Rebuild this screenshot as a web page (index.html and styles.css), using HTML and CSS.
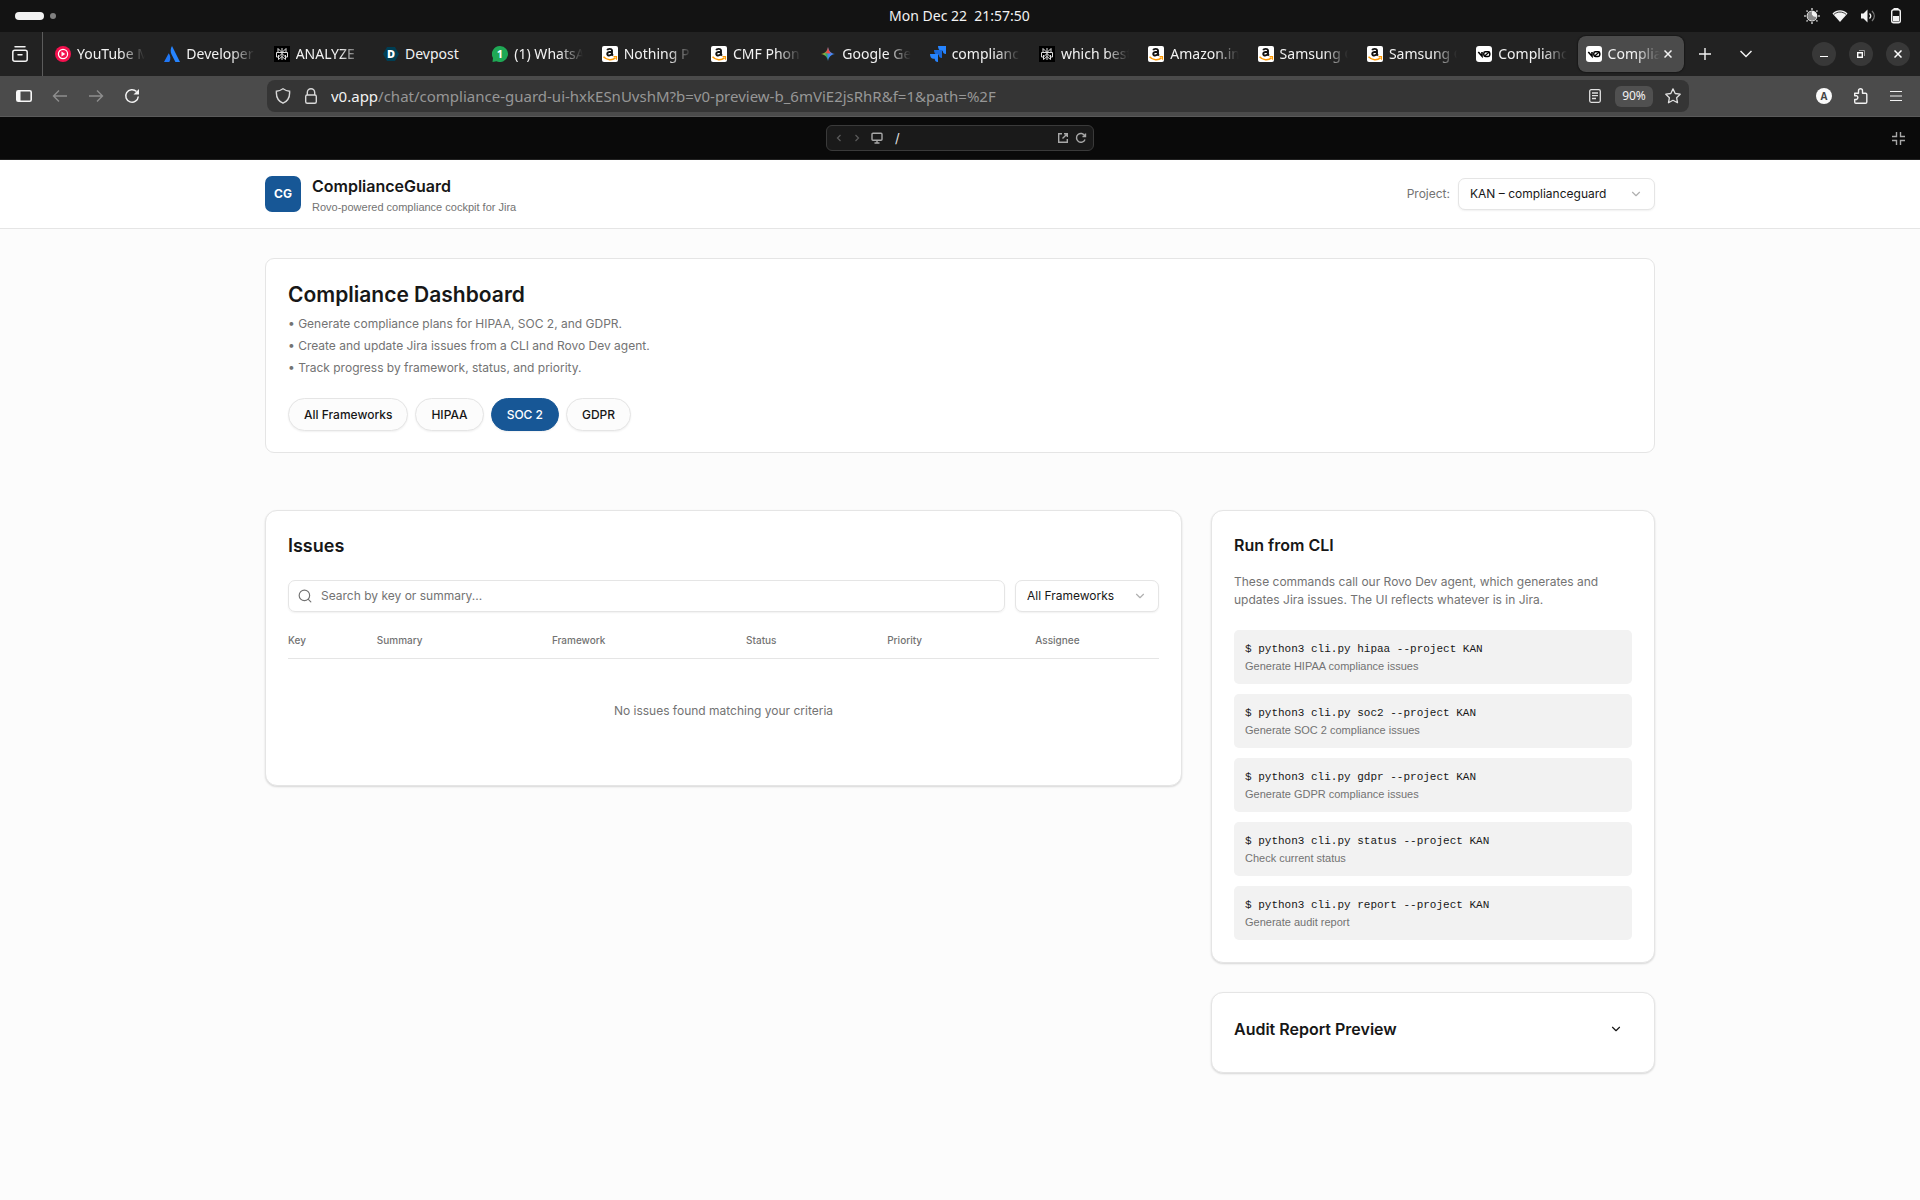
FILE: index.html
```html
<!DOCTYPE html>
<html lang="en">
<head>
<meta charset="utf-8">
<title>ComplianceGuard</title>
<link rel="stylesheet" href="styles.css">
</head>
<body>
<svg class="sprite" aria-hidden="true">
  <symbol id="fav-amazon" viewBox="0 0 16 16"><rect width="16" height="16" rx="2" fill="#fff"/><path d="M5.200 4.200C5.600 2.600 10 2.200 10 4.600v3.800l.9 1.200M9.900 5.800C7 5.800 5.200 6.300 5.200 8c0 2 3.600 2 4.700-.4" fill="none" stroke="#111" stroke-width="1.900"/><path d="M1.500 10.700c3.500 3.600 8.500 4 12 1.200" fill="none" stroke="#f90" stroke-width="1.500"/><path d="M11.500 10.700h3v3" fill="none" stroke="#f90" stroke-width="1.200"/></symbol>
  <symbol id="fav-perplexity" viewBox="0 0 16 16"><rect width="16" height="16" fill="#000"/><path d="M8 2v12M4 2.500l4 4 4-4v4H4zM2.500 6.500h11v4.500H11.500L8 7.500 4.500 11h-2zM4.500 9v4.500L8 10.500l3.500 3V9" fill="none" stroke="#ddd" stroke-width="1"/></symbol>
  <symbol id="fav-v0" viewBox="0 0 16 16"><rect width="16" height="16" rx="3" fill="#fff"/><path d="M2.300 6l3.700 4.200V6" fill="none" stroke="#000" stroke-width="1.600"/><rect x="7.800" y="5.800" width="6" height="4.600" rx="1.600" fill="none" stroke="#000" stroke-width="1.500"/><path d="M8.300 10.200l5-4.200" stroke="#000" stroke-width="1.200"/></symbol>
  <symbol id="chevron" viewBox="0 0 24 24"><path d="m6 9 6 6 6-6" fill="none" stroke="currentColor" stroke-width="2" stroke-linecap="round" stroke-linejoin="round"/></symbol>
</svg>

<div class="system-bar">
  <div class="workspaces"><span class="workspace-active"></span><span class="workspace-dot"></span></div>
  <time class="clock">Mon Dec 22&nbsp; 21:57:50</time>
  <div class="tray">
    <svg width="16" height="16" viewBox="0 0 16 16"><circle cx="8" cy="8" r="4.800" fill="none" stroke="#f2f2f2" stroke-width="1.200"/><path d="M8 3.500a4.500 4.500 0 1 0 4.500 5C9.500 9.500 7 7 8 3.500z" fill="#888"/><path d="M8 3.200a4.800 4.800 0 0 1 4.800 5.300C10 10 6.500 7 8 3.200z" fill="#f2f2f2"/><path d="M8 0v2M8 14v2M0 8h2M14 8h2M2.500 2.500l1.200 1.200M12.300 12.300l1.200 1.200M2.500 13.500l1.200-1.200M12.300 3.700l1.200-1.200" stroke="#bbb" stroke-width="1.600"/></svg>
    <svg width="16" height="16" viewBox="0 0 16 16"><path d="M.5 5.500C4.800 1.200 11.200 1.200 15.500 5.500L8 14z" fill="#f2f2f2"/><path d="M2 6.300c3.600-3 8.400-3 12 0" fill="none" stroke="#131313" stroke-width=".8"/></svg>
    <svg width="16" height="16" viewBox="0 0 16 16"><path d="M1 5.500h2.500L7.500 1.500v13l-4-4H1z" fill="#f2f2f2"/><path d="M9.500 5.500c1.500 1.500 1.500 3.500 0 5" fill="none" stroke="#f2f2f2" stroke-width="1.300"/><path d="M12 3c3 3 3 7 0 10" fill="none" stroke="#777" stroke-width="1.300"/></svg>
    <svg width="16" height="16" viewBox="0 0 16 16"><path d="M5.500 0h5v2h-5z" fill="#f2f2f2"/><rect x="3.700" y="1.700" width="8.600" height="13" rx="2" fill="none" stroke="#f2f2f2" stroke-width="1.400"/><path d="M5 8h6v5.500H5z" fill="#f2f2f2"/></svg>
  </div>
</div>

<div class="tab-bar">
  <button class="tab-history" aria-label="Recent browsing"><svg width="16" height="16" viewBox="0 0 16 16" fill="none" stroke="#f2f2f2" stroke-width="1.500"><path d="M3 .8h10M6 8.700h4" stroke-linecap="round"/><rect x=".8" y="4.200" width="14.400" height="11" rx="2"/></svg></button>
  <div class="tabs">
    <div class="tab"><svg class="fav" viewBox="0 0 16 16"><circle cx="8" cy="8" r="8" fill="#f4104e"/><circle cx="8" cy="8" r="4.600" fill="none" stroke="#fff" stroke-width="1.200"/><path d="M6.500 5.600v4.800L10.300 8z" fill="#fff"/></svg><button class="tab-label">YouTube M</button></div>
    <div class="tab"><svg class="fav" viewBox="0 0 16 16"><path d="M8 0C6.300 2.500 6.300 6 7.600 8.500L11.400 16H16z" fill="#2684ff"/><path d="M4.700 7.200L0 16h5.300c1.700-3 1.300-6.500-.6-8.800z" fill="#2077f5"/></svg><button class="tab-label">Developer</button></div>
    <div class="tab"><svg class="fav"><use href="#fav-perplexity"/></svg><button class="tab-label">ANALYZE</button></div>
    <div class="tab"><svg class="fav" viewBox="0 0 16 16"><path d="M4 1h8l4 7-4 7H4L0 8z" fill="#003e54"/><text x="8" y="12" text-anchor="middle" font-family="Open Sans, sans-serif" font-weight="800" font-size="11" fill="#fff">D</text></svg><button class="tab-label tab-label-fits">Devpost</button></div>
    <div class="tab"><svg class="fav" viewBox="0 0 16 16"><path d="M8 0a8 8 0 1 1-3.500 15.200L.5 16 1 12A8 8 0 0 1 8 0z" fill="#1fa855"/><text x="8" y="12" text-anchor="middle" font-family="Open Sans, sans-serif" font-weight="700" font-size="11" fill="#fff">1</text></svg><button class="tab-label">(1) WhatsA</button></div>
    <div class="tab"><svg class="fav"><use href="#fav-amazon"/></svg><button class="tab-label">Nothing P</button></div>
    <div class="tab"><svg class="fav"><use href="#fav-amazon"/></svg><button class="tab-label">CMF Phon</button></div>
    <div class="tab"><svg class="fav" viewBox="0 0 16 16"><defs><linearGradient id="gem" x1="0" y1=".5" x2="1" y2=".5"><stop offset="0" stop-color="#f9c80e"/><stop offset=".4" stop-color="#35a867"/><stop offset=".55" stop-color="#3f87f5"/><stop offset="1" stop-color="#4a8cff"/></linearGradient></defs><path d="M8 1c.8 4.200 2.800 6.200 7 7-4.200.8-6.200 2.800-7 7-.8-4.200-2.800-6.200-7-7 4.200-.8 6.200-2.800 7-7z" fill="url(#gem)"/><path d="M8 1c.8 4.200 2 5.500 3.500 6.200L8 7.500 5 7c1.700-1.200 2.500-3 3-6z" fill="#ea4a45"/></svg><button class="tab-label">Google Ge</button></div>
    <div class="tab"><svg class="fav" viewBox="0 0 16 16" fill="#2684ff"><path d="M8 0h8v8c-2 0-3.300-1.300-3.300-3.300H11C9 4.700 8 2.500 8 0z"/><path d="M4 4h8v8c-2 0-3.300-1.300-3.300-3.300H7C5 8.700 4 6.500 4 4z" fill="#1868db"/><path d="M0 8h8v8c-2 0-3.300-1.300-3.300-3.300H3C1 12.700 0 10.500 0 8z"/></svg><button class="tab-label">complianc</button></div>
    <div class="tab"><svg class="fav"><use href="#fav-perplexity"/></svg><button class="tab-label">which best</button></div>
    <div class="tab"><svg class="fav"><use href="#fav-amazon"/></svg><button class="tab-label">Amazon.in</button></div>
    <div class="tab"><svg class="fav"><use href="#fav-amazon"/></svg><button class="tab-label">Samsung G</button></div>
    <div class="tab"><svg class="fav"><use href="#fav-amazon"/></svg><button class="tab-label">Samsung G</button></div>
    <div class="tab"><svg class="fav"><use href="#fav-v0"/></svg><button class="tab-label">Complianc</button></div>
    <div class="tab tab-selected"><svg class="fav"><use href="#fav-v0"/></svg><button class="tab-label">Complia</button><button class="tab-close" aria-label="Close tab"><svg width="8" height="8" viewBox="0 0 8 8"><path d="M.5.5l7 7M7.500.5l-7 7" stroke="#f2f2f2" stroke-width="1.500"/></svg></button></div>
  </div>
  <div class="tab-tools">
    <button aria-label="New tab"><svg width="12" height="12" viewBox="0 0 12 12"><path d="M6 0v12M0 6h12" stroke="#f2f2f2" stroke-width="1.400"/></svg></button>
    <button aria-label="List all tabs"><svg width="12" height="8" viewBox="0 0 12 8"><path d="M.5 1L6 6.500 11.500 1" fill="none" stroke="#f2f2f2" stroke-width="1.500"/></svg></button>
  </div>
  <div class="window-controls">
    <button aria-label="Minimize"><svg width="8" height="8" viewBox="0 0 8 8"><path d="M0 6.500h8" stroke="#fff"/></svg></button>
    <button aria-label="Restore"><svg width="8" height="8" viewBox="0 0 8 8"><path d="M.7 2.700h4.600v4.600H.7z" fill="none" stroke="#fff" stroke-width="1.400"/><path d="M2 .5h5.500V6" fill="none" stroke="#999"/></svg></button>
    <button aria-label="Close"><svg width="8" height="8" viewBox="0 0 8 8"><path d="M.5.5l7 7M7.500.5l-7 7" stroke="#fff" stroke-width="1.500"/></svg></button>
  </div>
</div>

<div class="toolbar">
  <div class="toolbar-nav">
    <button aria-label="Sidebar"><svg width="16" height="12" viewBox="0 0 16 12"><rect x=".8" y=".8" width="14.400" height="10.400" rx="1.500" fill="none" stroke="#f8f8f8" stroke-width="1.600"/><path d="M1 1h3.500v10H1z" fill="#f8f8f8"/></svg></button>
    <button aria-label="Back"><svg width="16" height="16" viewBox="0 0 16 16" fill="none" stroke="#8e8e8e" stroke-width="1.400"><path d="M15 8H1.500M7 2.500L1.500 8 7 13.500"/></svg></button>
    <button aria-label="Forward"><svg width="16" height="16" viewBox="0 0 16 16" fill="none" stroke="#8e8e8e" stroke-width="1.400"><path d="M1 8h13.500M9 2.500L14.500 8 9 13.500"/></svg></button>
    <button aria-label="Reload"><svg width="16" height="16" viewBox="0 0 16 16"><path d="M12.500 3.500A6.300 6.300 0 1 0 14.300 8.500" fill="none" stroke="#f2f2f2" stroke-width="1.500"/><path d="M15 1v5.500H9.500z" fill="#f2f2f2"/></svg></button>
  </div>
  <div class="url-bar">
    <svg width="16" height="16" viewBox="0 0 16 16" fill="none" stroke="#d8d8d8" stroke-width="1.400"><path d="M8 .8c2.200 1.600 4.300 2.300 6.600 2.400.4 5.500-2 10-6.600 12C3.400 13.200 1 8.700 1.400 3.200 3.700 3.100 5.800 2.400 8 .8z"/></svg>
    <svg width="16" height="16" viewBox="0 0 16 16" fill="none" stroke="#d8d8d8" stroke-width="1.400"><rect x="2.700" y="7" width="10.600" height="8.300" rx="1.500"/><path d="M4.300 7V4.400a3.700 3.700 0 0 1 7.400 0V7"/></svg>
    <div class="url"><span class="url-host">v0.app</span>/chat/compliance-guard-ui-hxkESnUvshM?b=v0-preview-b_6mViE2jsRhR&amp;f=1&amp;path=%2F</div>
    <svg width="16" height="16" viewBox="0 0 16 16" fill="none" stroke="#e0e0e0" stroke-width="1.300"><rect x="2.700" y="1.700" width="10.600" height="12.600" rx="1.500"/><path d="M5 5h6M5 7.700h6M5 10.500h4"/></svg>
    <button class="zoom-level">90%</button>
    <svg width="16" height="16" viewBox="0 0 16 16" fill="none" stroke="#e0e0e0" stroke-width="1.300" stroke-linejoin="round"><path d="M8 .9l2.200 4.600 5 .7-3.600 3.500.9 5L8 12.300l-4.500 2.400.9-5L.8 6.200l5-.7z"/></svg>
  </div>
  <div class="toolbar-end">
    <button aria-label="Account"><svg width="16" height="16" viewBox="0 0 16 16"><circle cx="8" cy="8" r="8" fill="#fafafa"/><text x="8" y="12" text-anchor="middle" font-family="Open Sans, sans-serif" font-weight="700" font-size="10" fill="#444">A</text></svg></button>
    <button aria-label="Extensions"><svg width="16" height="16" viewBox="0 0 16 16" fill="none" stroke="#f2f2f2" stroke-width="1.400" stroke-linejoin="round"><path d="M1.700 5.200h3.800V2.700a2 2 0 0 1 4 0v2.500h3c.8 0 1.300.5 1.300 1.300v7.500c0 .8-.5 1.300-1.300 1.300H3c-.8 0-1.300-.5-1.300-1.300v-2.500h1.800a2 2 0 0 0 0-3.800H1.700z"/></svg></button>
    <button aria-label="Menu"><svg width="12" height="10" viewBox="0 0 12 10"><path d="M0 .5h12M0 5h12M0 9.500h12" stroke="#f2f2f2" stroke-width="1.200"/></svg></button>
  </div>
</div>

<div class="preview-bar">
  <div class="preview-nav">
    <svg width="12" height="12" viewBox="0 0 24 24" fill="none" stroke="#5a5a5a" stroke-width="2.500"><path d="m15 18-6-6 6-6"/></svg>
    <svg width="12" height="12" viewBox="0 0 24 24" fill="none" stroke="#5a5a5a" stroke-width="2.500"><path d="m9 18 6-6-6-6"/></svg>
    <svg class="preview-device" width="12" height="12" viewBox="0 0 12 12" fill="none" stroke="#a8a8a8" stroke-width="1.400"><rect x="1" y="1.200" width="10" height="7" rx="1"/><path d="M6 8.500v2.500M3.500 11h5"/></svg>
    <input class="preview-path" aria-label="Path" value="/">
    <svg width="12" height="12" viewBox="0 0 12 12" fill="none" stroke="#a8a8a8" stroke-width="1.400"><path d="M5 1.700H1.700v8.600h8.600V7M7 1.700h3.300v3.300M10.300 1.700L5.500 6.500"/></svg>
    <svg width="12" height="12" viewBox="0 0 12 12" fill="none" stroke="#a8a8a8" stroke-width="1.400"><path d="M9.800 3.800A4.400 4.400 0 1 0 10 7.500M10.500 1.500v3H7.500"/></svg>
  </div>
  <button class="preview-exit" aria-label="Exit fullscreen"><svg width="13" height="13" viewBox="0 0 13 13" fill="none" stroke="#a8a8a8" stroke-width="1.400"><path d="M4.500 0v4.500H0M8.500 0v4.500H13M4.500 13V8.500H0M8.500 13V8.500H13"/></svg></button>
</div>

<header class="site-header">
  <div class="container site-header-row">
    <div class="logo">CG</div>
    <div class="brand">
      <div class="brand-name">ComplianceGuard</div>
      <div class="brand-tagline">Rovo-powered compliance cockpit for Jira</div>
    </div>
    <label class="project-label" for="project">Project:</label>
    <div class="select project-select">
      <select id="project"><option>KAN – complianceguard</option></select>
      <svg><use href="#chevron"/></svg>
    </div>
  </div>
</header>

<main class="container">
  <section class="hero">
    <h1>Compliance Dashboard</h1>
    <ul class="hero-points">
      <li>• Generate compliance plans for HIPAA, SOC 2, and GDPR.</li>
      <li>• Create and update Jira issues from a CLI and Rovo Dev agent.</li>
      <li>• Track progress by framework, status, and priority.</li>
    </ul>
    <div class="pills">
      <button class="pill">All Frameworks</button>
      <button class="pill">HIPAA</button>
      <button class="pill pill-active">SOC 2</button>
      <button class="pill">GDPR</button>
    </div>
  </section>

  <div class="columns">
    <section class="card">
      <h2 class="issues-title">Issues</h2>
      <div class="filters">
        <div class="search">
          <svg width="14" height="14" viewBox="0 0 24 24" fill="none" stroke="#737373" stroke-width="2" stroke-linecap="round"><circle cx="11" cy="11" r="9"/><path d="m22 22-4.300-4.300"/></svg>
          <input type="text" placeholder="Search by key or summary..." aria-label="Search issues">
        </div>
        <div class="select framework-select">
          <select aria-label="Framework"><option>All Frameworks</option></select>
          <svg><use href="#chevron"/></svg>
        </div>
      </div>
      <table class="issues">
        <colgroup><col class="col-key"><col class="col-summary"><col class="col-framework"><col class="col-status"><col class="col-priority"><col></colgroup>
        <thead><tr><th>Key</th><th>Summary</th><th>Framework</th><th>Status</th><th>Priority</th><th>Assignee</th></tr></thead>
        <tbody><tr><td colspan="6">No issues found matching your criteria</td></tr></tbody>
      </table>
    </section>

    <div class="side">
      <section class="card">
        <h2>Run from CLI</h2>
        <p class="cli-intro">These commands call our Rovo Dev agent, which generates and updates Jira issues. The UI reflects whatever is in Jira.</p>
        <div class="commands">
          <div class="command"><code>$ python3 cli.py hipaa --project KAN</code><p>Generate HIPAA compliance issues</p></div>
          <div class="command"><code>$ python3 cli.py soc2 --project KAN</code><p>Generate SOC 2 compliance issues</p></div>
          <div class="command"><code>$ python3 cli.py gdpr --project KAN</code><p>Generate GDPR compliance issues</p></div>
          <div class="command"><code>$ python3 cli.py status --project KAN</code><p>Check current status</p></div>
          <div class="command"><code>$ python3 cli.py report --project KAN</code><p>Generate audit report</p></div>
        </div>
      </section>
      <section class="card audit">
        <h2>Audit Report Preview</h2>
        <button class="audit-toggle" aria-label="Expand"><svg width="14" height="14"><use href="#chevron"/></svg></button>
      </section>
    </div>
  </div>
</main>
</body>
</html>
```
FILE: styles.css
```css
* { box-sizing: border-box; }
body { margin: 0; min-height: 100vh; background: #fcfcfc; color: #171717; font-family: Inter, "Liberation Sans", sans-serif; font-size: 12px; line-height: 18px; }
button, input, select { font: inherit; color: inherit; margin: 0; padding: 0; border: 0; background: none; }
h1, h2, p, ul { margin: 0; padding: 0; }
svg { flex: none; display: block; }
.sprite { position: absolute; width: 0; height: 0; }

/* Desktop and browser chrome */
.system-bar, .tab-bar, .toolbar { font-family: "Noto Sans", "Open Sans", sans-serif; font-size: 14px; line-height: 20px; color: #f2f2f2; }
.system-bar { display: grid; grid-template-columns: 1fr auto 1fr; align-items: center; height: 32px; padding: 0 16px 0 15px; background: #131313; }
.workspaces { display: flex; align-items: center; gap: 6px; }
.workspace-active { width: 29px; height: 8px; border-radius: 4px; background: #f2f2f2; }
.workspace-dot { width: 6px; height: 6px; border-radius: 3px; background: #808080; }
.tray { display: flex; justify-content: flex-end; gap: 12px; }

.tab-bar { display: flex; align-items: center; height: 44px; background: #222; }
.tab-history { display: flex; align-items: center; justify-content: center; width: 43px; height: 44px; padding-right: 2px; border-right: 1px solid #5c5c5c; }
.tabs { display: flex; flex: 1; min-width: 0; gap: 3px; padding-left: 4px; }
.tab { display: flex; flex: 1 1 0; min-width: 0; align-items: center; gap: 6px; height: 36px; padding: 0 8px; border-radius: 8px; }
.tab-selected { background: #4b4b4b; box-shadow: 0 0 2px #000; }
.fav { width: 16px; height: 16px; }
.tab-label { flex: 1; min-width: 0; overflow: hidden; white-space: nowrap; text-align: left; mask-image: linear-gradient(to left, transparent, #000 24px); }
.tab-label-fits { mask-image: none; }
.tab-close { padding: 4px; margin-left: -6px; }
.tab-tools { display: flex; width: 128px; padding-left: 5px; }
.tab-tools button { display: flex; align-items: center; justify-content: center; width: 32px; height: 32px; margin-right: 9px; }
.window-controls { display: flex; gap: 13px; padding-right: 10px; }
.window-controls button { display: flex; align-items: center; justify-content: center; width: 24px; height: 24px; border-radius: 12px; background: #383838; }

.toolbar { display: flex; align-items: center; height: 41px; background: #4b4b4b; border-bottom: 1px solid #5a5a5a; }
.toolbar-nav { display: flex; align-items: center; gap: 20px; width: 267px; padding-left: 16px; }
.url-bar { display: flex; flex: 1; min-width: 0; align-items: center; gap: 12px; height: 32px; padding: 0 8px; border-radius: 8px; background: #353535; }
.url { flex: 1; min-width: 0; overflow: hidden; white-space: nowrap; color: #979797; font-size: 15px; }
.url-host { color: #f2f2f2; }
.zoom-level { width: 38px; height: 21px; border-radius: 6px; background: #505050; font-size: 12px; }
.toolbar-end { display: flex; justify-content: flex-end; align-items: center; gap: 21px; width: 231px; padding-right: 18px; }

.preview-bar { display: grid; grid-template-columns: 1fr 268px 1fr; align-items: center; height: 43px; background: #0a0a0a; border-bottom: 1px solid #222; }
.preview-nav { grid-column: 2; display: flex; align-items: center; gap: 6px; height: 26px; padding: 0 6px; border: 1px solid #3a3a3a; border-radius: 6px; background: #1a1a1a; }
.preview-device { margin: 0 4px 0 2px; }
.preview-path { flex: 1; min-width: 0; padding-left: 2px; color: #e5e5e5; font-size: 13px; }
.preview-exit { justify-self: end; margin-right: 15px; }

/* Application */
.container { max-width: 1438px; margin: 0 auto; padding: 0 24px; }
.site-header { background: #fff; border-bottom: 1px solid #e5e5e5; }
.site-header-row { display: flex; align-items: center; height: 68px; }
.logo { display: flex; align-items: center; justify-content: center; width: 36px; height: 36px; margin-right: 11px; border-radius: 7px; background: #175796; color: #fff; font-weight: 700; }
.brand { flex: 1; display: grid; gap: 3px; padding-top: 3px; }
.brand-name { font-size: 16px; font-weight: 600; line-height: 20px; }
.brand-tagline { font-family: "Liberation Sans", sans-serif; font-size: 11px; line-height: 16px; color: #737373; }
.project-label { margin-right: 8px; color: #737373; }
.select { display: flex; align-items: center; position: relative; height: 32px; border: 1px solid #e5e5e5; border-radius: 7px; background: #fff; box-shadow: 0 1px 2px rgba(0, 0, 0, .06); }
.select select { width: 100%; height: 100%; padding: 0 32px 0 11px; appearance: none; }
.select svg { position: absolute; right: 11px; width: 14px; height: 14px; color: #b0b0b0; pointer-events: none; }
.project-select { width: 197px; }
.framework-select { width: 144px; }

.hero { margin-top: 29px; padding: 22px 22px 21px; border: 1px solid #e5e5e5; border-radius: 9px; background: #fff; }
.hero h1 { font-size: 21px; font-weight: 600; line-height: 28px; }
.hero-points { margin: 4px 0 19px; list-style: none; line-height: 22px; color: #737373; }
.pills { display: flex; gap: 7px; }
.pill { height: 33px; padding: 0 15px; border: 1px solid #e5e5e5; border-radius: 17px; background: #fcfcfc; font-weight: 500; box-shadow: 0 1px 2px rgba(0, 0, 0, .06); }
.pill-active { border-color: #175796; background: #175796; color: #fff; }

.columns { display: grid; grid-template-columns: minmax(0, 917fr) minmax(0, 444fr); align-items: start; gap: 29px; margin-top: 57px; }
.side { display: grid; gap: 29px; }
.card { padding: 22px; border: 1px solid #e5e5e5; border-radius: 12px; background: #fff; box-shadow: 0 1px 2px rgba(0, 0, 0, .15); }
.card h2 { font-size: 16px; font-weight: 600; line-height: 24px; }
.card .issues-title { font-size: 18px; line-height: 26px; }
.filters { display: flex; gap: 10px; margin: 21px 0 11px; }
.search { display: flex; flex: 1; align-items: center; gap: 9px; height: 32px; padding: 0 9px; border: 1px solid #e5e5e5; border-radius: 7px; box-shadow: 0 1px 2px rgba(0, 0, 0, .06); }
.search input { flex: 1; min-width: 0; outline: 0; }
.search input::placeholder { color: #737373; opacity: 1; }
.issues { width: 100%; table-layout: fixed; border-collapse: separate; border-spacing: 0; }
.issues th { height: 36px; padding: 0 0 2px; border-bottom: 1px solid #e5e5e5; color: #737373; font-size: 10px; font-weight: 500; text-align: left; }
.issues td { height: 104px; padding: 0; color: #737373; text-align: center; }
.col-key { width: 10.2%; }
.col-summary { width: 20.1%; }
.col-framework { width: 22.3%; }
.col-status { width: 16.2%; }
.col-priority { width: 17%; }

.cli-intro { margin: 16px 0 21px; color: #737373; }
.commands { display: grid; gap: 10px; }
.command { display: grid; gap: 3px; padding: 12px 11px 11px; border-radius: 5px; background: #f2f2f2; font-size: 11px; line-height: 14px; }
.command code { font-family: "Liberation Mono", monospace; }
.command p { font-family: "Liberation Sans", sans-serif; color: #737373; }
.audit { display: flex; align-items: center; justify-content: space-between; padding-bottom: 29px; }
.audit-toggle { display: flex; align-items: center; justify-content: center; width: 32px; height: 28px; }
```
